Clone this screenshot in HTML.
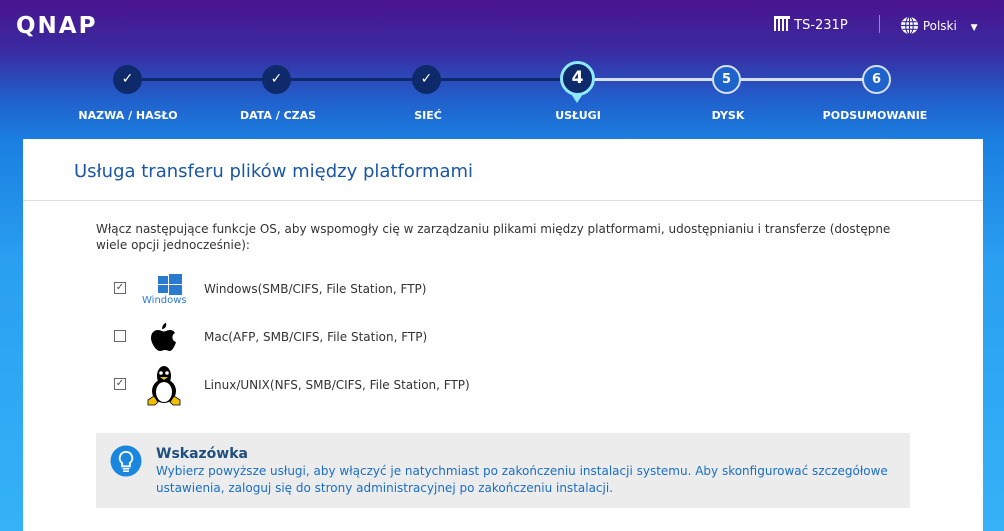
<!DOCTYPE html>
<html style="background:#35b2f7;height:531px;overflow:hidden"><head><meta charset="utf-8"><style>
*{margin:0;padding:0;box-sizing:border-box}
body{width:1004px;height:531px;overflow:hidden;font-family:"DejaVu Sans","Liberation Sans",sans-serif;background:linear-gradient(180deg,#4a148f 0px,#3a2aa0 50px,#2160cc 100px,#1a7fe0 140px,#2a9ff0 260px,#35b2f7 531px);position:relative}
.logo{position:absolute;left:16px;top:13px;color:#fff;font:bold 23px "DejaVu Sans",sans-serif;letter-spacing:2px}
.top{position:absolute;top:16px;color:#fff;font-size:13px}
.line{position:absolute;top:78px;height:3px}
.c{position:absolute;top:65px;width:29px;height:29px;border-radius:50%;background:#0e2a6b;color:#fff;text-align:center;line-height:29px;font-size:14px;font-weight:bold}
.c.o{background:#1e63cc;border:2px solid #d8e0f0;line-height:25px;font-size:13px}
.lab{position:absolute;top:109px;width:160px;text-align:center;color:#fff;font-size:11px;font-weight:bold}
.panel{position:absolute;left:23px;top:139px;width:960px;height:400px;background:#fff}
h1{position:absolute;left:51px;top:22px;font-weight:normal;font-size:18px;color:#1a56a8}
.hr{position:absolute;left:0;right:0;top:61px;border-top:1px solid #ddd}
.txt{position:absolute;left:73px;top:82px;width:805px;font-size:12px;color:#333;line-height:16px}
.row{position:absolute;left:90px;font-size:12px;color:#333}
.cb{position:absolute;left:91px;width:12px;height:12px;border:1px solid #666;font-size:10px;line-height:10px;text-align:center;color:#444}
.tip{position:absolute;left:73px;top:294px;width:814px;height:75px;background:#ececec}
</style></head><body>
<div class="logo">QNAP</div>
<div class="top" style="left:774px"><span style="display:inline-block;width:16px;height:15px;border-top:3px solid #fff;background:repeating-linear-gradient(90deg,#fff 0 2px,transparent 2px 4px);vertical-align:-2px"></span> TS-231P</div>
<div style="position:absolute;left:879px;top:15px;width:1px;height:18px;background:#8a8acc"></div>
<div class="top" style="left:900px;font-size:12px"><svg width="19" height="19" viewBox="0 0 20 20" style="vertical-align:-5px"><circle cx="10" cy="10" r="9" fill="#fff"/><g stroke="#3a2aa0" stroke-width="1.2" fill="none"><ellipse cx="10" cy="10" rx="4" ry="9"/><line x1="1" y1="10" x2="19" y2="10"/><line x1="2.5" y1="6" x2="17.5" y2="6"/><line x1="2.5" y1="14" x2="17.5" y2="14"/><line x1="10" y1="1" x2="10" y2="19"/></g></svg> Polski <span style="font-size:9px;margin-left:10px">▼</span></div>
<div class="line" style="left:128px;width:449px;background:#0e2a6b"></div>
<div class="line" style="left:577px;width:299px;background:#d8e0f0"></div>
<div class="c" style="left:113px">✓</div>
<div class="c" style="left:262px">✓</div>
<div class="c" style="left:412px">✓</div>
<div style="position:absolute;left:569px;top:91px;width:0;height:0;border-left:8px solid transparent;border-right:8px solid transparent;border-top:12px solid #8ee8ff"></div>
<div class="c" style="left:560px;top:61px;width:35px;height:35px;line-height:29px;border:3px solid #8ee8ff;font-size:17px">4</div>
<div class="c o" style="left:712px">5</div>
<div class="c o" style="left:862px">6</div>
<div class="lab" style="left:48px">NAZWA / HASŁO</div>
<div class="lab" style="left:198px">DATA / CZAS</div>
<div class="lab" style="left:348px">SIEĆ</div>
<div class="lab" style="left:498px">USŁUGI</div>
<div class="lab" style="left:648px">DYSK</div>
<div class="lab" style="left:795px">PODSUMOWANIE</div>
<div class="panel">
<h1>Usługa transferu plików między platformami</h1>
<div class="hr"></div>
<div class="txt">Włącz następujące funkcje OS, aby wspomogły cię w zarządzaniu plikami między platformami, udostępnianiu i transferze (dostępne wiele opcji jednocześnie):</div>
<div class="cb" style="top:143px">✓</div>
<svg style="position:absolute;left:129px;top:134px" width="36" height="22" viewBox="0 0 36 22"><g fill="#2a7ad0"><rect x="6" y="3" width="10" height="8"/><rect x="17" y="1" width="13" height="10"/><rect x="6" y="12" width="10" height="8"/><rect x="17" y="12" width="13" height="10"/></g></svg>
<div style="position:absolute;left:119px;top:156px;font-size:10px;color:#2a7ad0">Windows</div>
<div class="row" style="left:181px;top:143px">Windows(SMB/CIFS, File Station, FTP)</div>
<div class="cb" style="top:191px"></div>
<svg style="position:absolute;left:127px;top:181px" width="30" height="35" viewBox="0 0 30 33"><path d="M16 2c1 3-1 6-4 6 0-3 2-6 4-6z" fill="#000"/><path d="M8 9c3 0 4 1.5 6 1.5s3-1.5 6-1.5c2 0 4 1 5 3-4 2-3 8 1 9-1 4-4 9-6 9-2 0-3-1-5-1s-3 1-5 1C6 30 1 22 1 17c0-5 3-8 7-8z" fill="#000"/></svg>
<div class="row" style="left:181px;top:191px">Mac(AFP, SMB/CIFS, File Station, FTP)</div>
<div class="cb" style="top:239px">✓</div>
<svg style="position:absolute;left:122px;top:225px" width="38" height="42" viewBox="0 0 38 42"><ellipse cx="19" cy="12" rx="7" ry="10" fill="#000"/><ellipse cx="19" cy="27" rx="12" ry="12" fill="#000"/><ellipse cx="19" cy="28" rx="8" ry="10" fill="#fff"/><circle cx="16" cy="9" r="1.8" fill="#fff"/><circle cx="22" cy="9" r="1.8" fill="#fff"/><path d="M15 13h8l-4 3z" fill="#f0c000"/><path d="M3 36l6-4 4 6-3 3H3z" fill="#f0c000" stroke="#000" stroke-width=".8"/><path d="M35 36l-6-4-4 6 3 3h7z" fill="#f0c000" stroke="#000" stroke-width=".8"/></svg>
<div class="row" style="left:181px;top:239px">Linux/UNIX(NFS, SMB/CIFS, File Station, FTP)</div>
<div class="tip">
<svg style="position:absolute;left:14px;top:12px" width="32" height="32" viewBox="0 0 33 33"><circle cx="16.5" cy="16.5" r="16" fill="#1a86e0"/><path d="M16.5 7a6.5 6.5 0 0 0-4 11.6V22h8v-3.4A6.5 6.5 0 0 0 16.5 7z" fill="none" stroke="#fff" stroke-width="2"/><path d="M13 24.5h7M13.5 27h6" stroke="#fff" stroke-width="1.6"/></svg>
<div style="position:absolute;left:60px;top:13px;font-size:14px;font-weight:bold;color:#1f4e80">Wskazówka</div>
<div style="position:absolute;left:60px;top:30px;width:750px;font-size:12px;line-height:17px;color:#1a6fc4">Wybierz powyższe usługi, aby włączyć je natychmiast po zakończeniu instalacji systemu. Aby skonfigurować szczegółowe ustawienia, zaloguj się do strony administracyjnej po zakończeniu instalacji.</div>
</div>
</div>
</body></html>
